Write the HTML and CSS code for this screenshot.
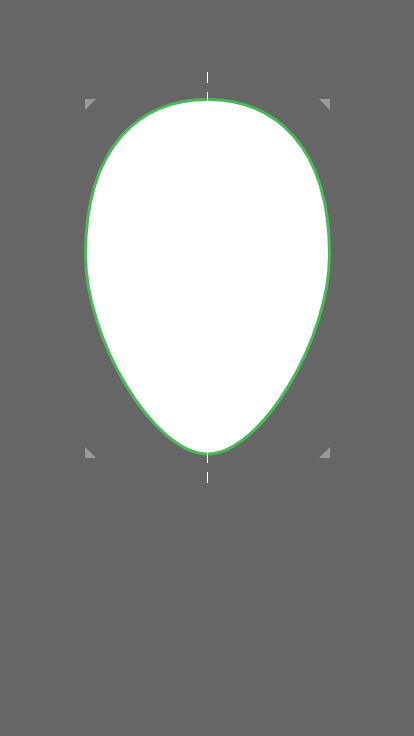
FILE: index.html
```html
<!DOCTYPE html>
<html>
<head>
<meta charset="utf-8">
<link rel="stylesheet" href="styles.css">
</head>
<body>
<div class="canvas">
  <svg class="stage" viewBox="0 0 414 736" width="414" height="736" xmlns="http://www.w3.org/2000/svg">
    <path class="egg" d="M207.5 99.5 C142.8 99.5 85.5 143 85.5 255 C85.5 338.6 153.8 454 207.5 454 C261.2 454 329.5 338.6 329.5 255 C329.5 143 272.2 99.5 207.5 99.5 Z"/>
    <line class="axis" x1="207.5" y1="72" x2="207.5" y2="484"/>
    <polygon class="handle" points="85,99 96,99 85,110"/>
    <polygon class="handle" points="319,99 330,99 330,110"/>
    <polygon class="handle" points="85,447 85,458 96,458"/>
    <polygon class="handle" points="330,447 330,458 319,458"/>
  </svg>
</div>
</body>
</html>
```
FILE: styles.css
```css
html, body {
  margin: 0;
  padding: 0;
  background: #666666;
}
.canvas {
  width: 414px;
  height: 736px;
  overflow: hidden;
}
.stage {
  display: block;
}
.egg {
  fill: #ffffff;
  stroke: #4cb85c;
  stroke-width: 3;
}
.axis {
  stroke: #ffffff;
  stroke-width: 1;
  stroke-dasharray: 11 9;
}
.handle {
  fill: #9a9a9a;
}
```
